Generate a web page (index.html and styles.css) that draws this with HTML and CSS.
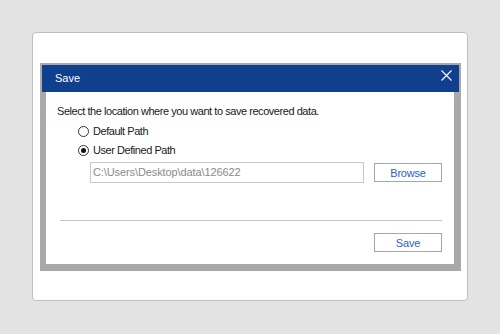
FILE: index.html
```html
<!doctype html>
<html lang="en">
  <head>
    <meta charset="UTF-8" />
    <meta name="viewport" content="width=device-width, initial-scale=1.0" />
    <title>Save</title>
    <link rel="stylesheet" href="styles.css">
  </head>
  <body>
    <div class="card">
      <div class="dialog">
        <div class="titlebar">
          <span class="title">Save</span>
          <svg class="close" width="11" height="11" viewBox="0 0 11 11">
            <path d="M0.5 0.5 L10.5 10.5 M10.5 0.5 L0.5 10.5" stroke="#ffffff" stroke-width="1.1" fill="none" />
          </svg>
        </div>
        <div class="dialog-body">
          <p class="prompt">Select the location where you want to save recovered data.</p>
          <div class="options">
            <label class="radio">
              <span class="dot"></span>
              <span>Default Path</span>
            </label>
            <label class="radio">
              <span class="dot checked"></span>
              <span>User Defined Path</span>
            </label>
          </div>
          <div class="path-row">
            <div class="path-input">C:\Users\Desktop\data\126622</div>
            <button class="btn" type="button">Browse</button>
          </div>
          <hr class="divider" />
          <div class="actions">
            <button class="btn" type="button">Save</button>
          </div>
        </div>
      </div>
    </div>
  </body>
</html>
```

FILE: styles.css
```css
:root {
  --page-bg: #e3e3e3;
  --frame: #a9a9a9;
  --title-blue: #103f8e;
  --text: #1a1a1a;
  --link-blue: #2a62c9;
}

* {
  margin: 0;
  padding: 0;
  box-sizing: border-box;
}

body {
  font-family: "Liberation Sans", Arial, sans-serif;
  background-color: var(--page-bg);
  color: var(--text);
  padding: 32px;
  height: 334px;
}

.card {
  width: 436px;
  height: 269px;
  background-color: #ffffff;
  border: 1px solid #bfbfbf;
  border-radius: 4px;
  padding: 30px 6px 0 7px;
}

.dialog {
  width: 421px;
  height: 208px;
  background-color: var(--frame);
  border: 2px solid var(--frame);
  display: flex;
  flex-direction: column;
}

.titlebar {
  height: 27px;
  background-color: var(--title-blue);
  display: flex;
  align-items: center;
  justify-content: space-between;
  padding: 0 7px 2px 13px;
}

.title {
  color: #ffffff;
  font-size: 11px;
}

.close {
  margin-top: -4px;
}

.dialog-body {
  flex: 1;
  background-color: #ffffff;
  margin: 0 5px 5px 4px;
  padding: 12px 12px 0 11px;
  letter-spacing: -0.45px;
}

.prompt {
  font-size: 11px;
  line-height: 14px;
}

.options {
  margin: 6px 0 0 21px;
  display: flex;
  flex-direction: column;
  gap: 5px;
}

.radio {
  display: flex;
  align-items: center;
  gap: 4px;
  font-size: 11px;
  line-height: 14px;
}

.dot {
  width: 11px;
  height: 11px;
  border: 1px solid #333333;
  border-radius: 50%;
  display: flex;
  align-items: center;
  justify-content: center;
}

.dot.checked::after {
  content: "";
  width: 5px;
  height: 5px;
  border-radius: 50%;
  background-color: #111111;
}

.path-row {
  display: flex;
  align-items: center;
  gap: 10px;
  margin: 5px 0 0 33px;
}

.path-input {
  width: 274px;
  height: 21px;
  border: 1px solid #c8c8c8;
  color: #8a8a8a;
  font-size: 11px;
  line-height: 19px;
  padding-left: 2px;
  letter-spacing: -0.1px;
}

.btn {
  width: 68px;
  height: 19px;
  background-color: #ffffff;
  border: 1px solid #a6a6a6;
  color: var(--link-blue);
  font-family: "Liberation Sans", Arial, sans-serif;
  font-size: 11px;
  letter-spacing: -0.2px;
  cursor: pointer;
}

.divider {
  border: none;
  border-top: 1px solid #c4c4c4;
  margin: 37px 0 0 3px;
}

.actions {
  display: flex;
  justify-content: flex-end;
  margin-top: 12px;
}
```
